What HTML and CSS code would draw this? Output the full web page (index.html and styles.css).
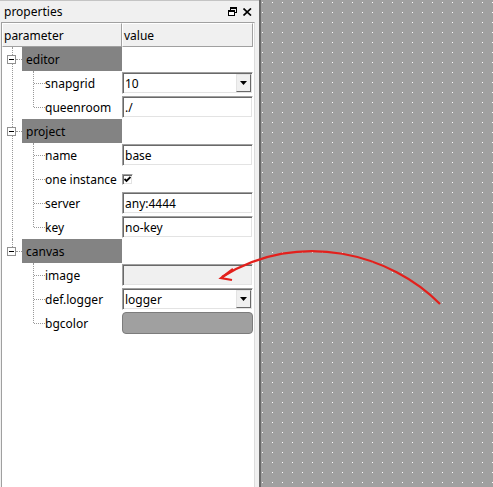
FILE: index.html
```
<!DOCTYPE html>
<html>
<head>
<meta charset="utf-8">
<link rel="stylesheet" href="styles.css">
</head>
<body>
<div class="app">
  <div class="panel">
    <div class="titlebar">
      <span class="title">properties</span>
      <div class="title-btns">
        <svg width="9" height="9" viewBox="0 0 9 9">
          <rect x="2.5" y="0.5" width="6" height="5" fill="none" stroke="#000"/>
          <rect x="2" y="0" width="7" height="2" fill="#000"/>
          <rect x="0.5" y="3.5" width="6" height="5" fill="#fff" stroke="#000"/>
          <rect x="0" y="3" width="7" height="2" fill="#000"/>
        </svg>
        <svg width="9" height="8" viewBox="0 0 9 8">
          <path d="M0.5 0.5 L8 7.5 M8 0.5 L0.5 7.5" stroke="#000" stroke-width="1.7" fill="none"/>
        </svg>
      </div>
    </div>
    <div class="tree">
      <div class="header">
        <div class="hcell hparam">parameter</div>
        <div class="hcell hvalue">value</div>
      </div>
      <div class="groups">
        <div class="group">
          <div class="row grow">
            <div class="name"><span class="exp"></span><span class="band">editor</span></div>
            <div class="val"></div>
          </div>
          <div class="children">
            <div class="row crow">
              <div class="name">snapgrid</div>
              <div class="val"><div class="field combo"><span>10</span><span class="dd"><svg width="7" height="4" viewBox="0 0 7 4"><polygon points="0,0 7,0 3.5,4" fill="#000"/></svg></span></div></div>
            </div>
            <div class="row crow">
              <div class="name">queenroom</div>
              <div class="val"><div class="field"><span>./</span></div></div>
            </div>
          </div>
        </div>
        <div class="group">
          <div class="row grow">
            <div class="name"><span class="exp"></span><span class="band">project</span></div>
            <div class="val"></div>
          </div>
          <div class="children">
            <div class="row crow">
              <div class="name">name</div>
              <div class="val"><div class="field"><span>base</span></div></div>
            </div>
            <div class="row crow">
              <div class="name">one instance</div>
              <div class="val"><div class="check"><svg width="7" height="7" viewBox="0 0 7 7"><polyline points="0.5,3 2.5,5 6.5,1" fill="none" stroke="#000" stroke-width="1.8"/></svg></div></div>
            </div>
            <div class="row crow">
              <div class="name">server</div>
              <div class="val"><div class="field"><span>any:4444</span></div></div>
            </div>
            <div class="row crow">
              <div class="name">key</div>
              <div class="val"><div class="field"><span>no-key</span></div></div>
            </div>
          </div>
        </div>
        <div class="group">
          <div class="row grow">
            <div class="name"><span class="exp"></span><span class="band">canvas</span></div>
            <div class="val"></div>
          </div>
          <div class="children">
            <div class="row crow">
              <div class="name">image</div>
              <div class="val"><div class="field readonly"></div></div>
            </div>
            <div class="row crow">
              <div class="name">def.logger</div>
              <div class="val"><div class="field combo"><span>logger</span><span class="dd"><svg width="7" height="4" viewBox="0 0 7 4"><polygon points="0,0 7,0 3.5,4" fill="#000"/></svg></span></div></div>
            </div>
            <div class="row crow">
              <div class="name">bgcolor</div>
              <div class="val"><div class="swatch"></div></div>
            </div>
          </div>
        </div>
      </div>
    </div>
  </div>
  <div class="divider"></div>
  <div class="canvas">
    <svg class="grid" width="100%" height="100%">
      <defs>
        <pattern id="dots" width="10" height="10" patternUnits="userSpaceOnUse">
          <rect x="1" y="2" width="1" height="1" fill="#ffffff"/>
        </pattern>
      </defs>
      <rect width="100%" height="100%" fill="url(#dots)"/>
    </svg>
  </div>
  <svg class="arrow" width="493" height="487" viewBox="0 0 493 487">
    <path d="M440 304 C392 255 300 228 222 277" fill="none" stroke="#e3201c" stroke-width="2.2"/>
    <path d="M233 269 L221 278 L232 280" fill="none" stroke="#e3201c" stroke-width="2.2" stroke-linejoin="miter"/>
  </svg>
</div>
</body>
</html>
```
FILE: styles.css
```
html, body {
  margin: 0;
  padding: 0;
}
body {
  font-family: "Noto Sans", "Segoe UI", sans-serif;
  font-size: 12px;
  color: #000;
  background: #f0f0f0;
}
.app {
  position: relative;
  display: flex;
  width: 493px;
  height: 487px;
  overflow: hidden;
}
.panel {
  width: 259px;
  flex: none;
  display: flex;
  flex-direction: column;
  background: #f0f0f0;
}
.titlebar {
  height: 22px;
  box-sizing: border-box;
  border-top: 1px solid #c4c4c4;
  display: flex;
  align-items: center;
  padding: 0 7px 0 4px;
}
.title {
  flex: 1;
}
.title-btns {
  display: flex;
  align-items: center;
  gap: 6px;
}
.tree {
  flex: 1;
  margin-left: 1px;
  width: 254px;
  box-sizing: border-box;
  background: #fff;
  border-left: 1px solid #a0a0a0;
  border-top: 1px solid #a0a0a0;
  border-right: 1px solid #dcdcdc;
}
.header {
  display: flex;
  height: 24px;
}
.hcell {
  box-sizing: border-box;
  height: 24px;
  background: #f0f0f0;
  border-top: 1px solid #fff;
  border-left: 1px solid #fff;
  border-right: 1px solid #a0a0a0;
  border-bottom: 1px solid #a0a0a0;
  display: flex;
  align-items: center;
  padding-left: 1px;
}
.hparam { width: 120px; }
.hvalue { width: 131px; }
.group {
  position: relative;
}
.group::before {
  content: "";
  position: absolute;
  left: 10px;
  top: 0;
  bottom: 0;
  border-left: 1px dotted #999;
}
.group:last-child::before {
  bottom: auto;
  height: 12px;
}
.row {
  display: flex;
  height: 24px;
}
.name {
  width: 120px;
  flex: none;
  position: relative;
  display: flex;
  align-items: center;
}
.grow .name::before {
  content: "";
  position: absolute;
  left: 14px;
  width: 6px;
  top: 12px;
  border-top: 1px dotted #999;
}
.exp {
  position: absolute;
  left: 5px;
  top: 8px;
  width: 9px;
  height: 9px;
  box-sizing: border-box;
  border: 1px solid #919191;
  background: #fff;
  z-index: 1;
}
.exp::after {
  content: "";
  position: absolute;
  left: 1px;
  top: 3px;
  width: 5px;
  height: 1px;
  background: #000;
}
.band {
  margin-left: 20px;
  flex: 1;
  align-self: stretch;
  background: #838383;
  display: flex;
  align-items: center;
  padding-left: 4px;
}
.children {
  position: relative;
}
.children::before {
  content: "";
  position: absolute;
  left: 31px;
  top: 0;
  height: calc(100% - 12px);
  border-left: 1px dotted #999;
}
.crow .name {
  padding-left: 43px;
  box-sizing: border-box;
}
.crow .name::before {
  content: "";
  position: absolute;
  left: 32px;
  width: 11px;
  top: 12px;
  border-top: 1px dotted #999;
}
.val {
  width: 131px;
  display: flex;
  align-items: flex-start;
}
.field {
  margin-top: 1px;
  width: 131px;
  height: 22px;
  box-sizing: border-box;
  border: 1px solid;
  border-color: #a0a0a0 #fff #fff #a0a0a0;
  box-shadow: inset 1px 1px #696969, inset -1px -1px #e3e3e3;
  background: #fff;
  display: flex;
  align-items: center;
  padding-left: 2px;
}
.field.readonly {
  background: #f0f0f0;
}
.dd {
  margin-left: auto;
  margin-right: 1px;
  width: 15px;
  height: 18px;
  box-sizing: border-box;
  background: #f0f0f0;
  border: 1px solid;
  border-color: #e3e3e3 #696969 #696969 #e3e3e3;
  display: flex;
  align-items: center;
  justify-content: center;
}
.check {
  margin-top: 7px;
  width: 11px;
  height: 11px;
  box-sizing: border-box;
  border: 1px solid;
  border-color: #a0a0a0 #fff #fff #a0a0a0;
  box-shadow: inset 1px 1px #696969, inset -1px -1px #e3e3e3;
  background: #fff;
  display: flex;
  align-items: center;
  justify-content: center;
}
.check svg {
  display: block;
}
.swatch {
  margin-top: 1px;
  width: 131px;
  height: 22px;
  box-sizing: border-box;
  background: #a0a0a0;
  border: 1px solid #7c7c7c;
  border-radius: 4px;
}
.divider {
  width: 2px;
  flex: none;
  background: #6a6a6a;
}
.canvas {
  flex: 1;
  background: #a0a0a0;
}
.grid {
  display: block;
}
.arrow {
  position: absolute;
  left: 0;
  top: 0;
  pointer-events: none;
}
```
